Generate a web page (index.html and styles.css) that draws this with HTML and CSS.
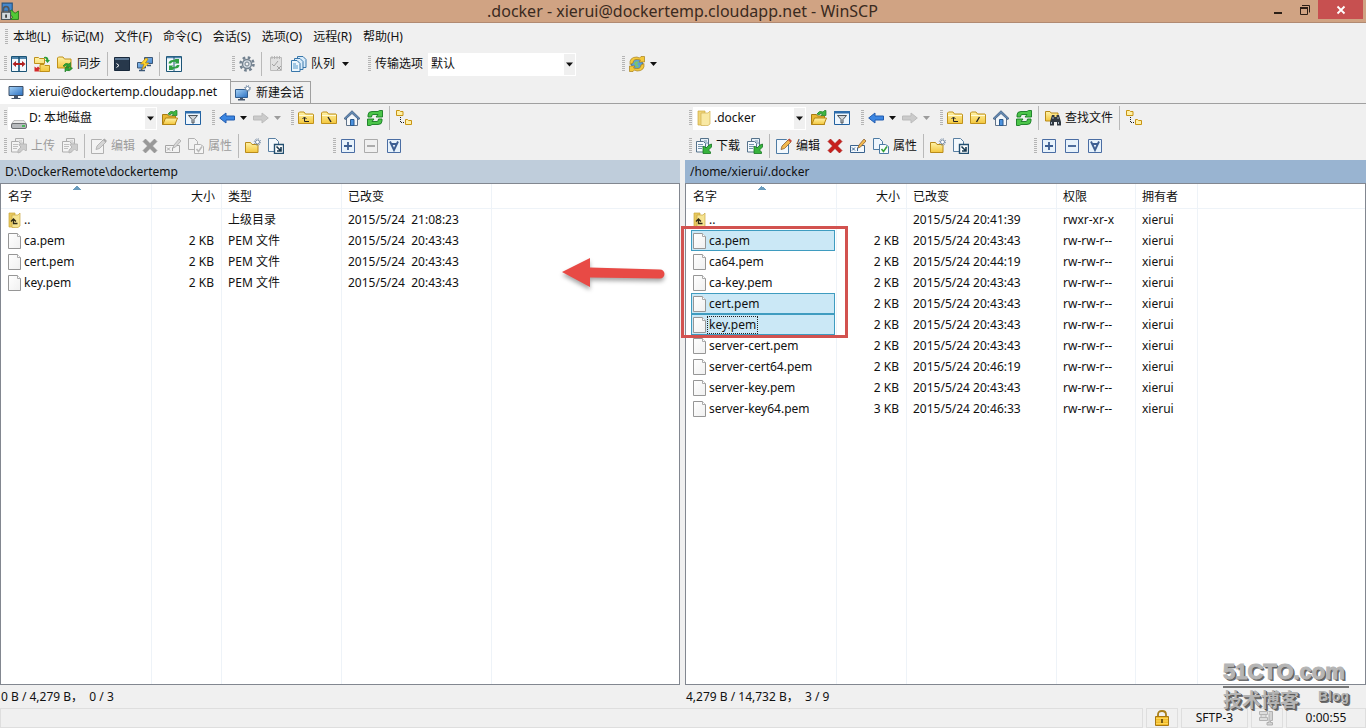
FILE: index.html
```html
<!DOCTYPE html>
<html lang="zh-CN">
<head>
<meta charset="utf-8">
<title>.docker - xierui@dockertemp.cloudapp.net - WinSCP</title>
<link rel="stylesheet" href="styles.css">
</head>
<body>
<svg class="defs" aria-hidden="true">
  <defs>
    <linearGradient id="g-folder" x1="0" y1="0" x2="0" y2="1"><stop offset="0" stop-color="#fff3a8"/><stop offset="1" stop-color="#f3c63c"/></linearGradient>
    <linearGradient id="g-blue" x1="0" y1="0" x2="1" y2="1"><stop offset="0" stop-color="#a8d4f8"/><stop offset="1" stop-color="#2a6fc0"/></linearGradient>
    <linearGradient id="g-page" x1="0" y1="0" x2="1" y2="1"><stop offset="0" stop-color="#ffffff"/><stop offset="1" stop-color="#f0f0f0"/></linearGradient>
    <symbol id="caret" viewBox="0 0 7 4"><path d="M0 0h7L3.500 4z" fill="currentColor"/></symbol>
    <symbol id="folder" viewBox="0 0 16 16"><path d="M.5 13.500v-10.500l1-1h4.500l1.500 2h7.500l.5.500v9z" fill="url(#g-folder)" stroke="#c0921c"/><path d="M1 5.500h14" stroke="#fffbd8"/></symbol>
    <symbol id="refresh" viewBox="0 0 16 16"><path d="M1 7V5Q1 1.500 5 1.500h6L12.500.5H15.500V7H9l2-2.500H6Q4.500 4.500 4.500 7zM15 9v2q0 3.500-4 3.500H5l-1.500 1H.5V9H7l-2 2.500h5q1.500 0 1.500-2.500z" fill="#4cc54a" stroke="#167a22" stroke-width=".9"/></symbol>
    <symbol id="monitor" viewBox="0 0 16 16"><path d="M1 2.500h14v9H1z" fill="url(#g-blue)" stroke="#3d4f66"/><path d="M6 12h4v2H6zM3.500 14h9v1h-9z" fill="#46566b"/></symbol>
    <symbol id="winscp" viewBox="0 0 16 16"><path d="M1 1h9v7H1z" fill="#4388cf" stroke="#285580"/><path d="M9 7l3.500 3L15.500 8v7.500H8.500l2-2L7 10z" fill="#52ca35" stroke="#257a16" stroke-width=".8"/><path d="M2 9V7q0-3 2.500-3T7 7v2" fill="none" stroke="#52575c" stroke-width="1.500"/><path d="M.5 9h8v6.500h-8z" fill="#d3d9dc" stroke="#4b5358"/><path d="M4.500 11v3" stroke="#333" stroke-width="1.500"/></symbol>
    <symbol id="compare" viewBox="0 0 16 16"><path d="M.5.500h15v15H.5z" fill="#f2f8fc" stroke="#1c5476"/><path d="M1 2h14" stroke="#4f86ac" stroke-width="2"/><path d="M8 1v14" stroke="#1c5476" stroke-width="1.600"/><path d="M1.500 8L5 5v2h6V5l3.500 3L11 11V9H5v2z" fill="#b02020"/></symbol>
    <symbol id="syncbrowse" viewBox="0 0 16 16"><path d="M.5 1.500h4l1 1h5v5H.5zM6 8.500h4l1 1h4.500v6H6z" fill="url(#g-folder)" stroke="#bf901a"/><path d="M10 1q4-1 4.500 3H16l-2.500 3L11 4h1.500Q12 2 10 2z" fill="#2c9c38"/><path d="M.5 10.500V15.500H6L4.500 14 6 12.500 4 10.500 2.500 12z" fill="#d42a2a"/></symbol>
    <symbol id="syncfolder" viewBox="0 0 16 16"><path d="M.5 12V2l1-1H6l1.500 2H14v9z" fill="url(#g-folder)" stroke="#bf901a"/><path d="M6 10q2-4 6-2l1.500-1.500V11H9l1.500-1.500Q9 8.500 7.500 10.500zM15.500 12q-2 4-6 2.500L8 16v-4.500h4L11 13q1.500.5 2.500-1.500z" fill="#2fa535" stroke="#1c7a24" stroke-width=".6"/></symbol>
    <symbol id="console" viewBox="0 0 16 16"><path d="M.5 1.500h15v13H.5z" fill="#27384b" stroke="#18283b"/><path d="M1 2h14v2H1z" fill="#5b7794"/><path d="M2.500 7.500l2.500 2-2.500 2" stroke="#fff" fill="none"/></symbol>
    <symbol id="putty" viewBox="0 0 16 16"><path d="M7.500 1.500h8v6h-8zM.5 6.500h8v5.500h-8z" fill="url(#g-blue)" stroke="#3c5878"/><path d="M10 9.500h4M2 14.500h6M4.500 12.500v2" stroke="#3c5878" stroke-width="1.500"/><path d="M9 2L3.500 8H7l-2 5.500L12 7H8.500L11 3z" fill="#ffd52e" stroke="#b7840d" stroke-width=".7"/></symbol>
    <symbol id="updown" viewBox="0 0 16 16"><path d="M.5.500h15v15H.5z" fill="#f2f8fc" stroke="#1c5476"/><path d="M1 1.500h14" stroke="#4f86ac" stroke-width="1.500"/><path d="M8 1v14" stroke="#1c5476"/><path d="M2.500 7.500q.5-4 5.500-3.500L9.500 3H13v4.500H8.500L10 6Q6 5 5 7.500zM13.500 9q-.5 4-5.500 3.500L6.500 14H3V9.500h4.500L6 11q4 .5 5-2z" fill="#2f9f43"/></symbol>
    <symbol id="gear" viewBox="0 0 16 16"><circle cx="8" cy="8" r="6.500" fill="none" stroke="#71808f" stroke-width="2.500" stroke-dasharray="2.600 2.500"/><circle cx="8" cy="8" r="4.500" fill="#d4dbe2" stroke="#74828f" stroke-width="1.400"/><circle cx="8" cy="8" r="2" fill="#f3f3f3" stroke="#74828f"/></symbol>
    <symbol id="qcheck" viewBox="0 0 16 16"><path d="M2.500 1.500h11v13h-11z" fill="#d2d2d2" stroke="#888"/><path d="M4 0v3M6.500 0v3M9 0v3M11.500 0v3" stroke="#777"/><path d="M4 8l2 2 4-5M9 10l4 4M13 10l-4 4" fill="none" stroke="#555"/></symbol>
    <symbol id="queue" viewBox="0 0 16 16"><path d="M6.500.5H12l3 3v8H6.500z" fill="#d9ecfb" stroke="#3977aa"/><path d="M3.500 2.500H9l3 3v8H3.500z" fill="#d9ecfb" stroke="#3977aa"/><path d="M.5 4.500H6l3 3v8H.5z" fill="#ecf6fd" stroke="#3977aa"/><path d="M2 8h3M2 10h5M2 12h5" stroke="#5598ca"/></symbol>
    <symbol id="globe" viewBox="0 0 16 16"><circle cx="8" cy="8" r="5.500" fill="#5a9fdc" stroke="#3572ac"/><path d="M5 7q2-3 5-1L8 8l2 2-2 2-2-3z" fill="#7cc36c"/><path d="M1 8.500Q0 1 8 1l2.500 1L12 .5h3.500V6H10l1.500-2Q4 2 4 7zM15 7.500q1 7.500-7 7.500l-2.500-1L4 15.500H.5V10H6l-1.500 2Q12 14 12 9z" fill="#f3c83a" stroke="#a88019" stroke-width=".7"/></symbol>
    <symbol id="newsession" viewBox="0 0 16 16"><path d="M.5 4.500h12v8H.5z" fill="url(#g-blue)" stroke="#315d8e"/><path d="M5 13h3v1h2v1.500H3V14h2z" fill="#46566b"/><circle cx="12.500" cy="3.500" r="2" fill="#fff" stroke="#6d87a3"/><circle cx="12.500" cy="3.500" r="3" fill="none" stroke="#6d87a3" stroke-dasharray="1 1.400"/></symbol>
    <symbol id="drive" viewBox="0 0 16 16"><path d="M3 6.500h10l2.500 3.500H.5z" fill="#e8e8e8" stroke="#999" stroke-width=".6"/><rect x=".5" y="9.500" width="15" height="5" rx="1.500" fill="#b7babd" stroke="#6c6f72"/><path d="M11 12h3" stroke="#27b83a" stroke-width="1.500"/></symbol>
    <symbol id="openfolder" viewBox="0 0 16 16"><path d="M.5 14.500V4.500h5l1 1.500h7v8.500z" fill="#e9b831" stroke="#a77b12"/><path d="M.8 14.500L3.500 8h12L13 14.500z" fill="url(#g-folder)" stroke="#b58615"/><path d="M6 4Q8 0 12 2l1.500-1.500H15v5h-5l1.500-1.500Q9.500 3 8 5z" fill="#3fb642" stroke="#1c7e26" stroke-width=".7"/></symbol>
    <symbol id="filter" viewBox="0 0 16 16"><path d="M.5 1.500h15v13H.5z" fill="#eef6fd" stroke="#2261a0"/><path d="M0 1h16v2.500H0z" fill="#2d6cab"/><path d="M3.500 5.500h9L9 9.500V13H7V9.500z" fill="#d2d5d8" stroke="#4c5358"/></symbol>
    <symbol id="back" viewBox="0 0 16 16"><path d="M.7 8L7 3v3h8.500v4H7v3z" fill="#3b86e2" stroke="#225caf"/></symbol>
    <symbol id="forward" viewBox="0 0 16 16"><path d="M15.300 8L9 3v3H.5v4H9v3z" fill="#a8a8a8" stroke="#888"/></symbol>
    <symbol id="parent" viewBox="0 0 16 16"><use href="#folder"/><path d="M11 11.500H6.500V7.500M4.500 9l2-2 2 2" fill="none" stroke="#222"/></symbol>
    <symbol id="rootwin" viewBox="0 0 16 16"><use href="#folder"/><path d="M7 7l3 5" stroke="#222" stroke-width="1.400"/></symbol>
    <symbol id="rootunix" viewBox="0 0 16 16"><use href="#folder"/><path d="M9.500 7l-3 5" stroke="#222" stroke-width="1.400"/></symbol>
    <symbol id="home" viewBox="0 0 16 16"><path d="M2.500 7v8.500h11V7L8 2z" fill="#f4f7fa" stroke="#60738a"/><path d="M0 8.500L8 .7l8 7.800-1.500 1L8 3.500l-6.500 6z" fill="#638bb5" stroke="#344f73" stroke-width=".7"/><path d="M6.500 9.500h3.500v6H6.500z" fill="#4b92df" stroke="#28598f"/></symbol>
    <symbol id="tree" viewBox="0 0 16 16"><path d="M.5.500h3l1 1h2.500v4H.5zM9.500 9.500h2l1 1h3v4h-6z" fill="#fff0a6" stroke="#c89413"/><path d="M4.500 7v5.500H9" fill="none" stroke="#222" stroke-dasharray="1 1"/></symbol>
    <symbol id="transfer" viewBox="0 0 16 16"><path d="M4.500.5h8v9h-8z" fill="#e6f0f8" stroke="#55728b"/><path d="M.5 3.500h7l2 2v8.500h-9z" fill="#f5fafe" stroke="#55728b"/><path d="M2 6.500h5M2 8.500h5M2 10.500h4M8 3h3M9 5h3" stroke="#7696ae"/></symbol>
    <symbol id="download" viewBox="0 0 16 16"><use href="#transfer"/><path d="M15.500 6v3l-3 3 2 2v1.500H7V8.500h1.500l1.500 1.500 3-3z" fill="#36b33c" stroke="#157621" stroke-width=".8"/></symbol>
    <symbol id="upload" viewBox="0 0 16 16"><use href="#transfer"/><path d="M7 15v-3l3-3-2-2V6h7.500v6.500H14L12.500 11 9.500 14z" fill="#aaa" stroke="#777" stroke-width=".8"/></symbol>
    <symbol id="edit" viewBox="0 0 16 16"><path d="M.5 1.500h10l2 2v12H.5z" fill="#f2f8fd" stroke="#4d7ba4"/><path d="M5 11.500l1-3.500 6.500-6.500 2.500 2.500L8.500 10.500z" fill="#f1b84d" stroke="#8d6130" stroke-width=".8"/><path d="M12 2l2.500 2.500L16 3l-2.500-2.500z" fill="#c64c3c"/></symbol>
    <symbol id="delete" viewBox="0 0 16 16"><path d="M1 3.500L3.500 1 8 5.500 12.500 1 15 3.500 10.500 8l4.500 4.500-2.500 2.500L8 10.500 3.500 15 1 12.500 5.500 8z" fill="#c81f1c" stroke="#9d1411" stroke-width=".6"/></symbol>
    <symbol id="rename" viewBox="0 0 16 16"><path d="M.5 7.500h14v7H.5z" fill="#f2f8fd" stroke="#39628e"/><path d="M2 9.500l3 3M5 9.500l-3 3M7.500 9.500v3.500" stroke="#39628e"/><path d="M8 10l1-3 5-6 2 2-5.500 6z" fill="#f2b94f" stroke="#8d6130" stroke-width=".8"/></symbol>
    <symbol id="props" viewBox="0 0 16 16"><path d="M.5.500h6l3 3v8h-9z" fill="#eef6fd" stroke="#4d7ba4"/><path d="M6.500 6.500h6l3 2v7h-9z" fill="#f8fcff" stroke="#4d7ba4"/><path d="M8.500 11l2 2.500 3.500-5" fill="none" stroke="#37a238" stroke-width="1.600"/></symbol>
    <symbol id="newfolder" viewBox="0 0 16 16"><path d="M.5 14.500v-10h5l1.500 2h6v8z" fill="url(#g-folder)" stroke="#b98b1a"/><circle cx="12.500" cy="4" r="2" fill="#fff" stroke="#758ba5"/><circle cx="12.500" cy="4" r="3.200" fill="none" stroke="#758ba5" stroke-dasharray="1.200 1.300"/></symbol>
    <symbol id="shortcut" viewBox="0 0 16 16"><path d="M.5.500h7l3 3v10H.5z" fill="#f4f9fd" stroke="#597fa2"/><path d="M6.500 6.500h9v9h-9z" fill="#fff" stroke="#234f70" stroke-width="1.400"/><path d="M8.500 8.500l4 4M13 9v4H9" fill="none" stroke="#17384f" stroke-width="1.600"/></symbol>
    <symbol id="plus" viewBox="0 0 16 16"><path d="M1.500 1.500h13v13h-13z" fill="#e7f2fb" stroke="#4a6da3"/><path d="M4 8h8M8 4v8" stroke="#3c5e92" stroke-width="1.800"/></symbol>
    <symbol id="minus" viewBox="0 0 16 16"><path d="M1.500 1.500h13v13h-13z" fill="#e7f2fb" stroke="#4a6da3"/><path d="M4 8h8" stroke="#3c5e92" stroke-width="1.800"/></symbol>
    <symbol id="mask" viewBox="0 0 16 16"><path d="M1.500 1.500h13v13h-13z" fill="#e7f2fb" stroke="#4a6da3"/><path d="M4 3.500l4 8.500 4-8.500M5 6h6" fill="none" stroke="#3c5e92" stroke-width="1.900"/></symbol>
    <symbol id="find" viewBox="0 0 16 16"><path d="M.5 11V1.500H5L6 3h7v8z" fill="url(#g-folder)" stroke="#b98b1a"/><path d="M7 5h2.500v2h2V5H14l2 7v3.500h-4V12h-3v3.500H5V12z" fill="#303840"/><path d="M6.500 12v2M13.500 12v2M8 7v2M13 7v2" stroke="#a9b8c6"/></symbol>
    <symbol id="docfolder" viewBox="0 0 14 16"><path d="M1 1h7v14H1z" fill="#eed579" stroke="#cda93f" stroke-width=".7"/><path d="M4 3h7l2-2v13l-2 1.500H4z" fill="#f9e9a4" stroke="#d1b154" stroke-width=".7"/></symbol>
    <symbol id="updir" viewBox="0 0 13 16"><path d="M1 1h6v14H1z" fill="#e6c85d" stroke="#caa63b" stroke-width=".7"/><path d="M4 3h6l2-2v13l-2 1.500H4z" fill="#f6e492" stroke="#c9a842" stroke-width=".7"/><path d="M9.500 11.500H5.500V7M3 9.500L5.500 7 8 9.500" fill="none" stroke="#2f2a18" stroke-width="1.300"/></symbol>
    <symbol id="file" viewBox="0 0 13 16"><path d="M.5.500h9l3 3v12H.5z" fill="url(#g-page)" stroke="#969696"/><path d="M9.500.5v3h3" fill="#fff" stroke="#aaa"/></symbol>
    <symbol id="lock" viewBox="0 0 14 16"><path d="M3 7V4.500Q3 1 7 1t4 3.500V7" fill="none" stroke="#a97f1a" stroke-width="1.800"/><path d="M.5 6.500h13v9H.5z" fill="#f2bd2b" stroke="#a87813"/><path d="M1 8.500h12M1 11h12M1 13.500h12" stroke="#ffdc68" stroke-width=".8"/><path d="M7 9v4" stroke="#5a430c" stroke-width="1.600"/></symbol>
    <symbol id="archive" viewBox="0 0 16 16"><path d="M.5 1.500h8v3h-8zM2 4.500h5v3H2zM.5 7.500h8v3h-8z" fill="#ddd" stroke="#b4b4b4"/><path d="M9.500 1.500h4v9h-2v2h2v2.500H8v-2.500h2v-9" fill="#d3d3d3" stroke="#b0b0b0"/></symbol>
  </defs>
</svg>

<div class="window">
  <header class="titlebar">
    <svg class="icon title-icon"><use href="#winscp"/></svg>
    <h1 class="title">.docker - xierui@dockertemp.cloudapp.net - WinSCP</h1>
    <div class="controls">
      <button class="control" aria-label="最小化"><svg viewBox="0 0 12 12"><path d="M2 9h8" stroke="#2c1f16" stroke-width="2"/></svg></button>
      <button class="control" aria-label="还原"><svg viewBox="0 0 12 12"><path d="M1.500 4.500h7v6h-7zM3 1.500h7.500v7" fill="none" stroke="#2c1f16"/><path d="M1 4h8" stroke="#2c1f16" stroke-width="2"/></svg></button>
      <button class="control close" aria-label="关闭"><svg viewBox="0 0 12 12"><path d="M2.500 2.500l7 7M9.500 2.500l-7 7" stroke="#fff" stroke-width="1.800"/></svg></button>
    </div>
  </header>

  <nav class="menubar">
    <span class="grip"></span>
    <button>本地(L)</button><button>标记(M)</button><button>文件(F)</button><button>命令(C)</button><button>会话(S)</button><button>选项(O)</button><button>远程(R)</button><button>帮助(H)</button>
  </nav>

  <div class="toolbar">
    <div class="band band-main">
      <span class="grip"></span>
      <button class="tool" aria-label="比较"><svg class="icon"><use href="#compare"/></svg></button>
      <button class="tool" aria-label="同步浏览"><svg class="icon"><use href="#syncbrowse"/></svg></button>
      <button class="tool labelled"><svg class="icon"><use href="#syncfolder"/></svg>同步</button>
      <span class="sep"></span>
      <button class="tool" aria-label="控制台"><svg class="icon"><use href="#console"/></svg></button>
      <button class="tool" aria-label="PuTTY"><svg class="icon"><use href="#putty"/></svg></button>
      <span class="sep"></span>
      <button class="tool" aria-label="更新"><svg class="icon"><use href="#updown"/></svg></button>
    </div>
    <div class="band band-queue">
      <span class="grip"></span>
      <button class="tool" aria-label="设置"><svg class="icon"><use href="#gear"/></svg></button>
      <span class="sep"></span>
      <button class="tool" aria-label="处理" disabled><svg class="icon"><use href="#qcheck"/></svg></button>
      <button class="tool labelled"><svg class="icon"><use href="#queue"/></svg>队列<svg class="caret"><use href="#caret"/></svg></button>
    </div>
    <div class="band band-preset">
      <span class="grip"></span>
      <label class="preset-label" for="preset">传输选项</label>
      <span class="combo combo-preset"><select id="preset"><option>默认</option></select><svg class="caret"><use href="#caret"/></svg></span>
    </div>
    <div class="band">
      <span class="grip"></span>
      <button class="tool split" aria-label="站点"><svg class="icon"><use href="#globe"/></svg><svg class="caret"><use href="#caret"/></svg></button>
    </div>
  </div>

  <div class="tabs">
    <button class="tab active"><svg class="icon"><use href="#monitor"/></svg>xierui@dockertemp.cloudapp.net</button>
    <button class="tab"><svg class="icon"><use href="#newsession"/></svg>新建会话</button>
  </div>

  <main class="panels">
    <section class="panel local">
      <div class="toolbar">
        <div class="band band-place">
          <span class="grip"></span>
          <span class="combo"><svg class="icon drive-icon"><use href="#drive"/></svg><select aria-label="驱动器"><option>D: 本地磁盘</option></select><svg class="caret"><use href="#caret"/></svg></span>
          <button class="tool" aria-label="打开目录"><svg class="icon"><use href="#openfolder"/></svg></button>
          <button class="tool" aria-label="过滤"><svg class="icon"><use href="#filter"/></svg></button>
        </div>
        <div class="band band-history">
          <span class="grip"></span>
          <button class="tool split" aria-label="后退"><svg class="icon"><use href="#back"/></svg><svg class="caret"><use href="#caret"/></svg></button>
          <button class="tool split" aria-label="前进" disabled><svg class="icon"><use href="#forward"/></svg><svg class="caret"><use href="#caret"/></svg></button>
        </div>
        <div class="band">
          <span class="grip"></span>
          <button class="tool" aria-label="上级目录"><svg class="icon"><use href="#parent"/></svg></button>
          <button class="tool" aria-label="根目录"><svg class="icon"><use href="#rootwin"/></svg></button>
          <button class="tool" aria-label="主目录"><svg class="icon"><use href="#home"/></svg></button>
          <button class="tool" aria-label="刷新"><svg class="icon"><use href="#refresh"/></svg></button>
          <span class="sep"></span>
          <button class="tool" aria-label="目录树"><svg class="icon"><use href="#tree"/></svg></button>
        </div>
      </div>
      <div class="toolbar">
        <div class="band band-files">
          <span class="grip"></span>
          <button class="tool labelled" disabled><svg class="icon"><use href="#upload"/></svg>上传</button>
          <button class="tool" aria-label="上传队列" disabled><svg class="icon"><use href="#upload"/></svg></button>
          <span class="sep"></span>
          <button class="tool labelled" disabled><svg class="icon"><use href="#edit"/></svg>编辑</button>
          <button class="tool" aria-label="删除" disabled><svg class="icon"><use href="#delete"/></svg></button>
          <button class="tool" aria-label="重命名" disabled><svg class="icon"><use href="#rename"/></svg></button>
          <button class="tool labelled" disabled><svg class="icon"><use href="#props"/></svg>属性</button>
          <span class="sep"></span>
          <button class="tool" aria-label="新建目录"><svg class="icon"><use href="#newfolder"/></svg></button>
          <button class="tool" aria-label="快捷方式"><svg class="icon"><use href="#shortcut"/></svg></button>
        </div>
        <div class="band">
          <span class="grip"></span>
          <button class="tool" aria-label="选择"><svg class="icon"><use href="#plus"/></svg></button>
          <button class="tool" aria-label="取消选择" disabled><svg class="icon"><use href="#minus"/></svg></button>
          <button class="tool" aria-label="反选"><svg class="icon"><use href="#mask"/></svg></button>
        </div>
      </div>
      <div class="path">D:\DockerRemote\dockertemp</div>
      <div class="list">
        <table>
          <colgroup><col class="c-name"><col class="c-size"><col class="c-type"><col class="c-date"><col></colgroup>
          <thead><tr><th class="sorted">名字</th><th class="num">大小</th><th>类型</th><th>已改变</th><th></th></tr></thead>
          <tbody>
            <tr><td><span class="file"><svg class="file-icon"><use href="#updir"/></svg><span class="label">..</span></span></td><td></td><td>上级目录</td><td>2015/5/24&nbsp; 21:08:23</td><td></td></tr>
            <tr><td><span class="file"><svg class="file-icon"><use href="#file"/></svg><span class="label">ca.pem</span></span></td><td class="num">2 KB</td><td>PEM 文件</td><td>2015/5/24&nbsp; 20:43:43</td><td></td></tr>
            <tr><td><span class="file"><svg class="file-icon"><use href="#file"/></svg><span class="label">cert.pem</span></span></td><td class="num">2 KB</td><td>PEM 文件</td><td>2015/5/24&nbsp; 20:43:43</td><td></td></tr>
            <tr><td><span class="file"><svg class="file-icon"><use href="#file"/></svg><span class="label">key.pem</span></span></td><td class="num">2 KB</td><td>PEM 文件</td><td>2015/5/24&nbsp; 20:43:43</td><td></td></tr>
            <tr class="rest"><td></td><td></td><td></td><td></td><td></td></tr>
          </tbody>
        </table>
      </div>
      <div class="summary">0 B / 4,279 B，&nbsp; 0 / 3</div>
    </section>

    <section class="panel remote">
      <div class="toolbar">
        <div class="band band-place">
          <span class="grip"></span>
          <span class="combo"><svg class="icon"><use href="#docfolder"/></svg><select aria-label="远程目录"><option>.docker</option></select><svg class="caret"><use href="#caret"/></svg></span>
          <button class="tool" aria-label="打开目录"><svg class="icon"><use href="#openfolder"/></svg></button>
          <button class="tool" aria-label="过滤"><svg class="icon"><use href="#filter"/></svg></button>
        </div>
        <div class="band band-history">
          <span class="grip"></span>
          <button class="tool split" aria-label="后退"><svg class="icon"><use href="#back"/></svg><svg class="caret"><use href="#caret"/></svg></button>
          <button class="tool split" aria-label="前进" disabled><svg class="icon"><use href="#forward"/></svg><svg class="caret"><use href="#caret"/></svg></button>
        </div>
        <div class="band">
          <span class="grip"></span>
          <button class="tool" aria-label="上级目录"><svg class="icon"><use href="#parent"/></svg></button>
          <button class="tool" aria-label="根目录"><svg class="icon"><use href="#rootunix"/></svg></button>
          <button class="tool" aria-label="主目录"><svg class="icon"><use href="#home"/></svg></button>
          <button class="tool" aria-label="刷新"><svg class="icon"><use href="#refresh"/></svg></button>
          <span class="sep"></span>
          <button class="tool labelled"><svg class="icon"><use href="#find"/></svg>查找文件</button>
          <span class="sep"></span>
          <button class="tool" aria-label="目录树"><svg class="icon"><use href="#tree"/></svg></button>
        </div>
      </div>
      <div class="toolbar">
        <div class="band band-files">
          <span class="grip"></span>
          <button class="tool labelled"><svg class="icon"><use href="#download"/></svg>下载</button>
          <button class="tool" aria-label="下载队列"><svg class="icon"><use href="#download"/></svg></button>
          <span class="sep"></span>
          <button class="tool labelled"><svg class="icon"><use href="#edit"/></svg>编辑</button>
          <button class="tool" aria-label="删除"><svg class="icon"><use href="#delete"/></svg></button>
          <button class="tool" aria-label="重命名"><svg class="icon"><use href="#rename"/></svg></button>
          <button class="tool labelled"><svg class="icon"><use href="#props"/></svg>属性</button>
          <span class="sep"></span>
          <button class="tool" aria-label="新建目录"><svg class="icon"><use href="#newfolder"/></svg></button>
          <button class="tool" aria-label="快捷方式"><svg class="icon"><use href="#shortcut"/></svg></button>
        </div>
        <div class="band">
          <span class="grip"></span>
          <button class="tool" aria-label="选择"><svg class="icon"><use href="#plus"/></svg></button>
          <button class="tool" aria-label="取消选择"><svg class="icon"><use href="#minus"/></svg></button>
          <button class="tool" aria-label="反选"><svg class="icon"><use href="#mask"/></svg></button>
        </div>
      </div>
      <div class="path">/home/xierui/.docker</div>
      <div class="list">
        <table>
          <colgroup><col class="c-name"><col class="c-size"><col class="c-date"><col class="c-rights"><col class="c-owner"><col></colgroup>
          <thead><tr><th class="sorted">名字</th><th class="num">大小</th><th>已改变</th><th>权限</th><th>拥有者</th><th></th></tr></thead>
          <tbody>
            <tr><td><span class="file"><svg class="file-icon"><use href="#updir"/></svg><span class="label">..</span></span></td><td></td><td>2015/5/24 20:41:39</td><td>rwxr-xr-x</td><td>xierui</td><td></td></tr>
            <tr><td><span class="file selected"><svg class="file-icon"><use href="#file"/></svg><span class="label">ca.pem</span></span></td><td class="num">2 KB</td><td>2015/5/24 20:43:43</td><td>rw-rw-r--</td><td>xierui</td><td></td></tr>
            <tr><td><span class="file"><svg class="file-icon"><use href="#file"/></svg><span class="label">ca64.pem</span></span></td><td class="num">2 KB</td><td>2015/5/24 20:44:19</td><td>rw-rw-r--</td><td>xierui</td><td></td></tr>
            <tr><td><span class="file"><svg class="file-icon"><use href="#file"/></svg><span class="label">ca-key.pem</span></span></td><td class="num">2 KB</td><td>2015/5/24 20:43:43</td><td>rw-rw-r--</td><td>xierui</td><td></td></tr>
            <tr><td><span class="file selected"><svg class="file-icon"><use href="#file"/></svg><span class="label">cert.pem</span></span></td><td class="num">2 KB</td><td>2015/5/24 20:43:43</td><td>rw-rw-r--</td><td>xierui</td><td></td></tr>
            <tr><td><span class="file selected"><svg class="file-icon"><use href="#file"/></svg><span class="label focused">key.pem</span></span></td><td class="num">2 KB</td><td>2015/5/24 20:43:43</td><td>rw-rw-r--</td><td>xierui</td><td></td></tr>
            <tr><td><span class="file"><svg class="file-icon"><use href="#file"/></svg><span class="label">server-cert.pem</span></span></td><td class="num">2 KB</td><td>2015/5/24 20:43:43</td><td>rw-rw-r--</td><td>xierui</td><td></td></tr>
            <tr><td><span class="file"><svg class="file-icon"><use href="#file"/></svg><span class="label">server-cert64.pem</span></span></td><td class="num">2 KB</td><td>2015/5/24 20:46:19</td><td>rw-rw-r--</td><td>xierui</td><td></td></tr>
            <tr><td><span class="file"><svg class="file-icon"><use href="#file"/></svg><span class="label">server-key.pem</span></span></td><td class="num">2 KB</td><td>2015/5/24 20:43:43</td><td>rw-rw-r--</td><td>xierui</td><td></td></tr>
            <tr><td><span class="file"><svg class="file-icon"><use href="#file"/></svg><span class="label">server-key64.pem</span></span></td><td class="num">3 KB</td><td>2015/5/24 20:46:33</td><td>rw-rw-r--</td><td>xierui</td><td></td></tr>
            <tr class="rest"><td></td><td></td><td></td><td></td><td></td><td></td></tr>
          </tbody>
        </table>
        <div class="mark-box"></div>
        <svg class="mark-arrow" viewBox="0 0 108 36"><path d="M3 15L31 1v9.500l70 2a4.500 4.500 0 0 1 0 9L31 20.500V30z" fill="#e84a45"/></svg>
      </div>
      <div class="summary">4,279 B / 14,732 B，&nbsp; 3 / 9</div>
    </section>
  </main>

  <footer class="statusbar">
    <div class="pane pane-main"></div>
    <div class="pane pane-icon"><svg class="lock"><use href="#lock"/></svg></div>
    <div class="pane pane-proto">SFTP-3</div>
    <div class="pane pane-icon"><svg class="icon"><use href="#archive"/></svg></div>
    <div class="pane pane-time">0:00:55</div>
  </footer>

  <div class="watermark">
    <div class="wm-site">51CTO.com</div>
    <div class="wm-sub"><span>技术博客</span><span class="wm-blog">Blog</span></div>
  </div>
</div>
</body>
</html>
```

FILE: styles.css
```css
* { box-sizing: border-box; }

body {
  margin: 0;
  background: #f0f0f0;
  color: #111;
  font: 12px/16px "Noto Sans", "Noto Sans CJK SC", sans-serif;
}

button, select {
  font: inherit;
  color: inherit;
  border: 0;
  margin: 0;
  padding: 0;
  background: none;
  white-space: nowrap;
}

svg { display: block; flex: none; }
.defs { position: absolute; width: 0; height: 0; }
.icon { width: 16px; height: 16px; }
.caret { width: 7px; height: 4px; }

.window {
  position: relative;
  display: flex;
  flex-direction: column;
  height: 100vh;
  min-height: 480px;
  overflow: hidden;
}

/* Title bar */
.titlebar {
  display: flex;
  height: 23px;
  background: #d0a383;
  border-bottom: 1px solid #b18a72;
}
.title-icon { width: 18px; height: 18px; margin: 2px 0 0 1px; }
.title {
  flex: 1;
  margin: 0;
  padding-left: 82px;
  font-size: 16px;
  font-weight: 400;
  line-height: 22px;
  text-align: center;
  color: #3a2a20;
}
.controls { display: flex; align-items: flex-start; padding-right: 3px; }
.control {
  display: flex;
  align-items: center;
  justify-content: center;
  width: 27px;
  height: 19px;
}
.control svg { width: 12px; height: 12px; }
.control.close { width: 45px; background: #c75050; }

/* Menu and toolbars */
.grip {
  flex: none;
  width: 3px;
  height: 16px;
  margin-right: 1px;
  background: repeating-linear-gradient(#b4b4b4 0 1px, transparent 1px 2px);
}
.menubar {
  display: flex;
  align-items: center;
  gap: 11px;
  height: 27px;
  padding-left: 5px;
}
.menubar .grip { margin-right: -6px; }

.toolbar { display: flex; height: 28px; padding-left: 4px; }
.band { display: flex; flex: none; align-items: center; }
.band-main { width: 228px; }
.band-queue { width: 136px; }
.band-preset { width: 254px; }
.band-place { padding-right: 7px; }
.band-history { width: 79px; }
.band-files { width: 329px; }
.local .band-place { width: 208px; }
.remote .band-place { width: 172px; }
.remote .band-files { width: 345px; }

.tool {
  display: flex;
  flex: none;
  align-items: center;
  gap: 4px;
  height: 22px;
  padding: 0 4px 0 3px;
}
.tool.labelled .caret { margin-left: 3px; }
.tool.split { gap: 5px; padding-right: 3px; }
.tool:disabled { color: #9c9c9c; }
.tool:disabled .icon { filter: grayscale(1); opacity: 0.5; }
.sep { width: 1px; height: 24px; margin: 0 3px 0 2px; background: #b9b9b9; }

.combo {
  position: relative;
  display: flex;
  flex: 1;
  align-items: center;
  gap: 2px;
  height: 23px;
  margin-right: 2px;
  padding: 0 0 0 3px;
  background: #fff;
}
.combo select {
  flex: 1;
  min-width: 0;
  height: 23px;
  appearance: none;
}
.combo .caret {
  position: absolute;
  right: 1px;
  top: 1px;
  width: 11px;
  height: 21px;
  padding: 8px 2px;
  background: #f0f0f0;
  pointer-events: none;
}
.drive-icon { align-self: flex-end; }
.preset-label { width: 53px; margin-left: 3px; }
.combo-preset { flex: none; width: 148px; }

/* Session tabs */
.tabs {
  display: flex;
  align-items: flex-end;
  height: 26px;
  background: linear-gradient(#a0a0a0, #a0a0a0) left bottom / 100% 1px no-repeat;
}
.tab {
  display: flex;
  align-items: center;
  gap: 5px;
  height: 23px;
  padding: 0 6px 0 4px;
  border: 1px solid #a0a0a0;
  border-left: 0;
}
.tab.active {
  min-width: 231px;
  height: 25px;
  padding: 0 7px 1px 8px;
  border-bottom: 0;
  background: #fff;
}

/* File panels */
.panels { display: flex; flex: 1; gap: 5px; min-height: 0; }
.panel { display: flex; flex-direction: column; min-width: 0; }
.local { flex: 680 0 0; }
.remote { flex: 681 0 0; }
.path {
  height: 23px;
  padding: 0 5px;
  background: #bfcddb;
  line-height: 23px;
}
.remote .path { background: #99b4d1; }
.list {
  position: relative;
  flex: 1;
  min-height: 0;
  border: 1px solid #828790;
  background: #fff;
}
table {
  width: 100%;
  height: 100%;
  table-layout: fixed;
  border-spacing: 0;
}
.c-name { width: 151px; }
.c-size { width: 70px; }
.c-type { width: 120px; }
.c-date { width: 150px; }
.c-rights { width: 79px; }
.c-owner { width: 62px; }
th, td {
  height: 21px;
  padding: 0 6px;
  border-right: 1px solid #eef3f8;
  font-weight: 400;
  text-align: left;
  white-space: nowrap;
}
th:last-child, td:last-child { border-right: 0; }
th { height: 25px; padding-top: 2px; border-bottom: 1px solid #eef3f8; }
th.sorted {
  padding-left: 7px;
  background:
    linear-gradient(135deg, transparent 50%, #6a9cbd 50%) 72px 2px / 4px 4px no-repeat,
    linear-gradient(225deg, transparent 50%, #6a9cbd 50%) 76px 2px / 4px 4px no-repeat;
}
.num { text-align: right; }
td.num { padding-right: 7px; }
td:first-child { padding: 0 1px 0 5px; }
.rest td { height: auto; }
.file {
  display: flex;
  align-items: center;
  gap: 1px;
  height: 21px;
  padding-left: 1px;
  border: 1px solid transparent;
}
.file-icon { width: 13px; height: 16px; }
.label { padding: 0 1px; border: 1px dotted transparent; }
.file.selected { border-color: #3f9cc0; background: #cbe8f6; }
.label.focused { border-color: #222; }
.summary { height: 23px; padding-left: 1px; line-height: 24px; }

/* Annotations over the file list */
.mark-box {
  position: absolute;
  left: -5px;
  top: 42px;
  width: 167px;
  height: 112px;
  border: 3px solid #d2524f;
}
.mark-arrow {
  position: absolute;
  left: -127px;
  top: 73px;
  width: 108px;
  height: 36px;
  filter: drop-shadow(0 3px 2px #00000059);
}

/* Status bar */
.statusbar { display: flex; gap: 3px; height: 20px; }
.pane {
  display: flex;
  align-items: center;
  justify-content: center;
  border: 1px solid #dedede;
}
.pane-main { flex: 1; }
.pane-icon { width: 32px; }
.pane-proto { width: 67px; }
.pane-time { width: 80px; }
.lock { width: 14px; height: 16px; }

.watermark {
  position: absolute;
  right: 17px;
  bottom: 14px;
  width: 126px;
  color: #b5b5b5;
  font-family: "Liberation Sans", "Noto Sans CJK SC", sans-serif;
  font-weight: 700;
  text-shadow: 1px 1px 0 #5c5c5c, 2px 2px 0 #707070;
}
.wm-site {
  border-bottom: 2px solid #777;
  font-size: 22px;
  line-height: 28px;
  -webkit-text-stroke: 1px #b5b5b5;
}
.wm-sub {
  display: flex;
  justify-content: space-between;
  font-size: 19px;
  line-height: 26px;
}
.wm-blog {
  font-size: 14px;
  line-height: 16px;
}
```
